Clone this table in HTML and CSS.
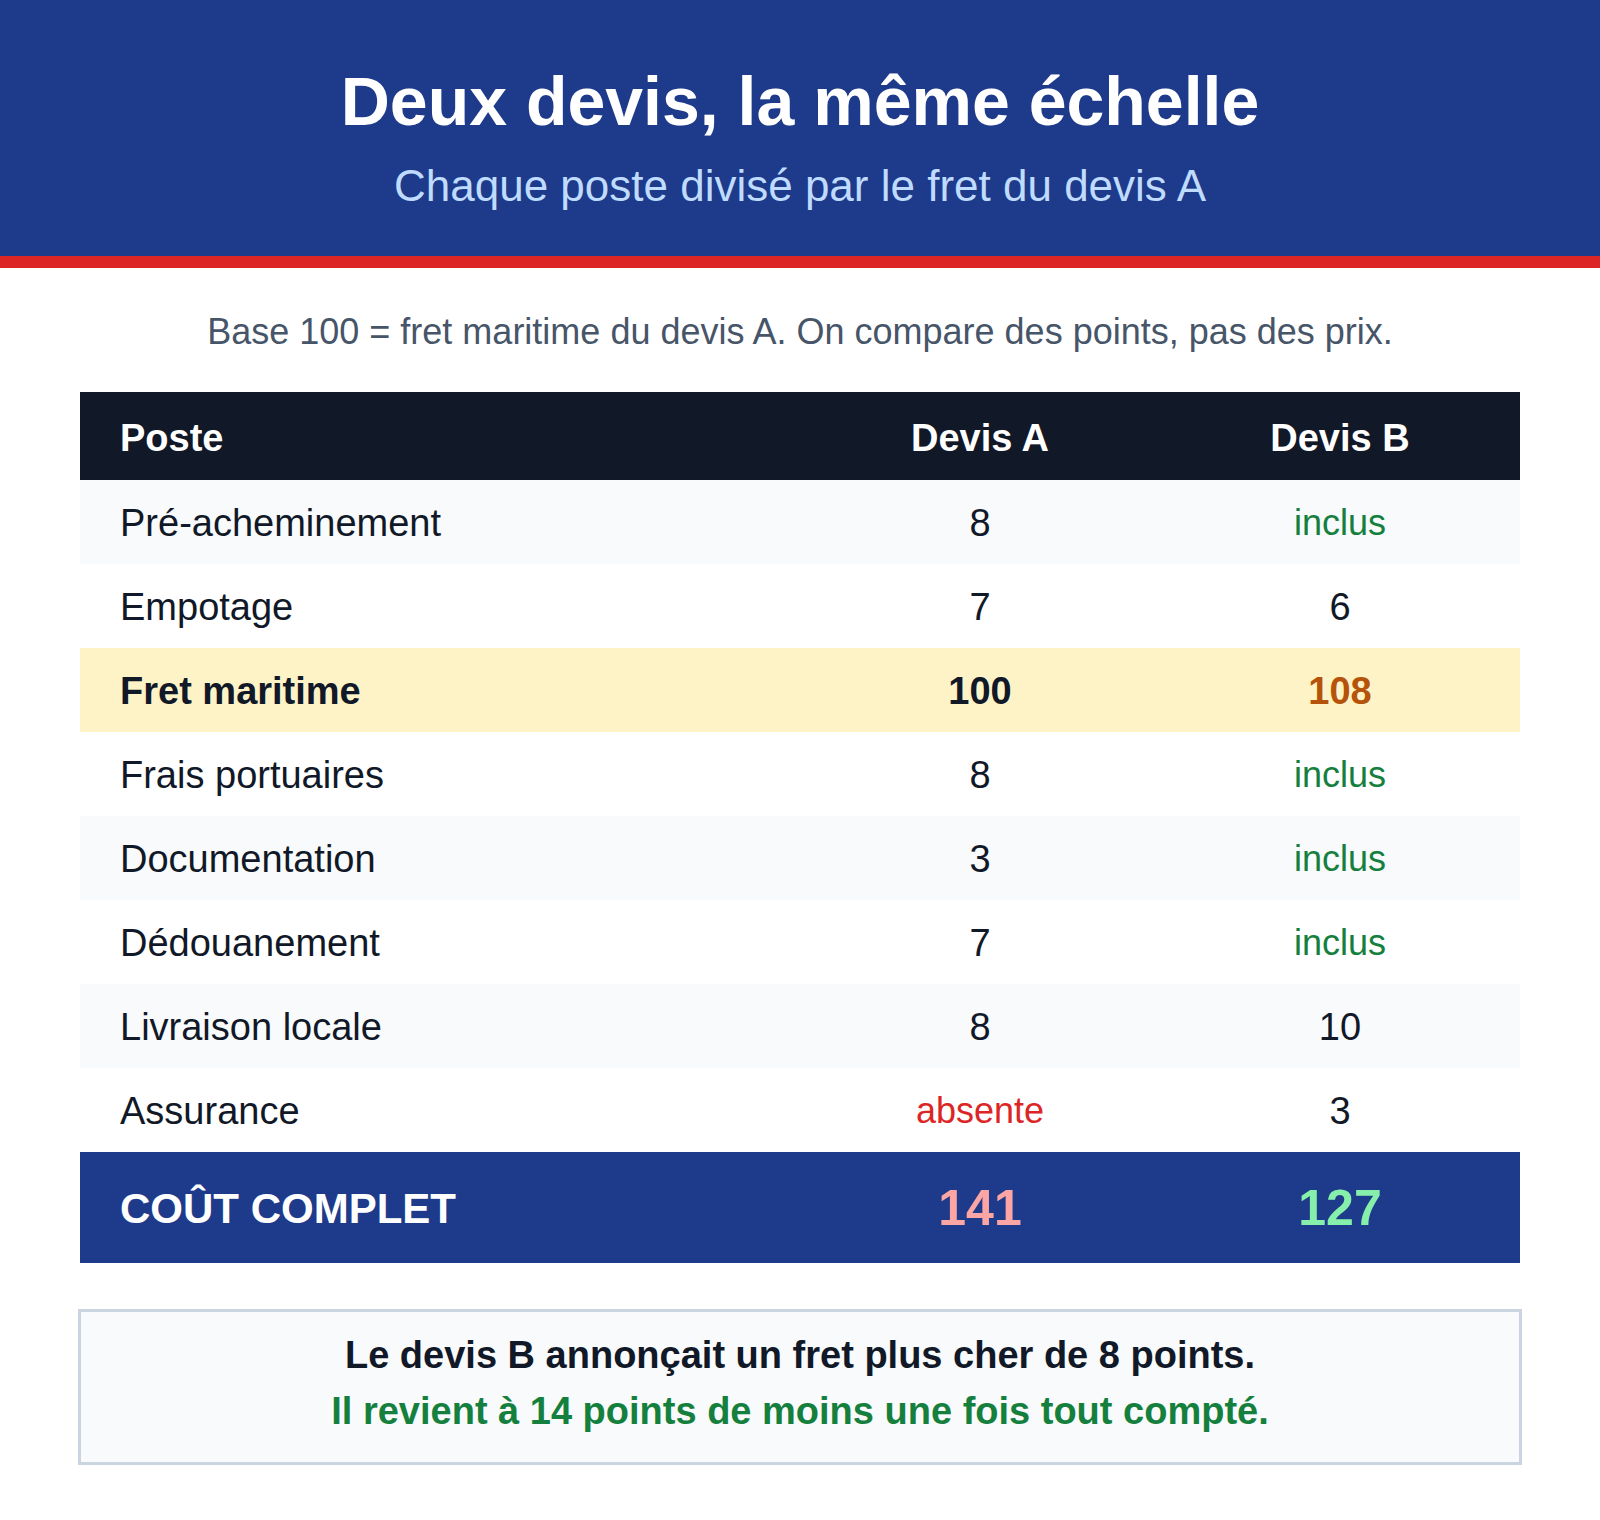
FILE: index.html
```html
<!DOCTYPE html>
<html lang="fr">
<head>
<meta charset="utf-8">
<title>Deux devis, la même échelle</title>
<link rel="stylesheet" href="styles.css">
</head>
<body>
<header class="hero">
  <h1 class="hero-title">Deux devis, la même échelle</h1>
  <p class="hero-sub">Chaque poste divisé par le fret du devis A</p>
</header>
<main class="content">
  <p class="intro">Base 100 = fret maritime du devis A. On compare des points, pas des prix.</p>
  <table class="grid">
    <colgroup>
      <col class="col-poste">
      <col class="col-val">
      <col class="col-val">
    </colgroup>
    <thead>
      <tr>
        <th class="c-left">Poste</th>
        <th>Devis A</th>
        <th>Devis B</th>
      </tr>
    </thead>
    <tbody>
      <tr><td class="c-left">Pré-acheminement</td><td>8</td><td class="inc">inclus</td></tr>
      <tr><td class="c-left">Empotage</td><td>7</td><td>6</td></tr>
      <tr class="hl"><td class="c-left">Fret maritime</td><td>100</td><td class="up">108</td></tr>
      <tr><td class="c-left">Frais portuaires</td><td>8</td><td class="inc">inclus</td></tr>
      <tr><td class="c-left">Documentation</td><td>3</td><td class="inc">inclus</td></tr>
      <tr><td class="c-left">Dédouanement</td><td>7</td><td class="inc">inclus</td></tr>
      <tr><td class="c-left">Livraison locale</td><td>8</td><td>10</td></tr>
      <tr><td class="c-left">Assurance</td><td class="abs">absente</td><td>3</td></tr>
    </tbody>
    <tfoot>
      <tr>
        <td class="c-left">COÛT COMPLET</td>
        <td class="tot-a">141</td>
        <td class="tot-b">127</td>
      </tr>
    </tfoot>
  </table>
  <div class="summary">
    <p class="sum-line">Le devis B annonçait un fret plus cher de 8 points.</p>
    <p class="sum-line sum-good">Il revient à 14 points de moins une fois tout compté.</p>
  </div>
</main>
</body>
</html>
```
FILE: styles.css
```css
* { box-sizing: border-box; }
html, body {
  margin: 0;
  padding: 0;
  background: #ffffff;
  font-family: "Liberation Sans", Arial, sans-serif;
  color: #111827;
}
.hero {
  background: #1e3a8a;
  border-bottom: 12px solid #dc2626;
  padding: 61px 40px 44px;
  text-align: center;
}
.hero-title {
  margin: 0;
  font-size: 68px;
  line-height: 1.2;
  font-weight: 700;
  color: #ffffff;
}
.hero-sub {
  margin: 17px 0 0;
  font-size: 44px;
  line-height: 1.2;
  color: #bfdbfe;
}
.content {
  padding: 0 80px;
}
.intro {
  margin: 42px 0 38px;
  text-align: center;
  font-size: 36px;
  line-height: 1.2;
  color: #475569;
}
.grid {
  width: 100%;
  border-collapse: collapse;
  table-layout: fixed;
}
.col-poste { width: 50%; }
.col-val { width: 25%; }
.grid th, .grid td {
  text-align: center;
  font-size: 38px;
  line-height: 44px;
  padding: 21px 40px 19px;
}
.grid .c-left { text-align: left; }
.grid thead th {
  background: #111827;
  color: #ffffff;
  font-weight: 700;
  padding: 24px 40px 20px;
}
.grid tbody tr { background: #ffffff; }
.grid tbody tr:nth-child(odd) { background: #f8fafc; }
.grid tbody tr.hl { background: #fef3c7; }
.grid tbody tr.hl td { font-weight: 700; }
.grid .inc { color: #15803d; font-size: 36px; }
.grid .abs { color: #dc2626; font-size: 36px; }
.grid .up { color: #b45309; }
.grid tfoot tr { background: #1e3a8a; }
.grid tfoot td {
  color: #ffffff;
  font-weight: 700;
  font-size: 42px;
  line-height: 55px;
  padding: 29px 40px 27px;
}
.grid tfoot td.tot-a { color: #fca5a5; font-size: 50px; }
.grid tfoot td.tot-b { color: #86efac; font-size: 50px; }
.summary {
  margin: 46px -2px 0;
  border: 3px solid #cbd5e1;
  background: #f8fafc;
  padding: 15px 40px 23px;
  text-align: center;
}
.sum-line {
  margin: 0;
  font-size: 38px;
  line-height: 56px;
  font-weight: 700;
  color: #111827;
}
.sum-good { color: #15803d; }
```
